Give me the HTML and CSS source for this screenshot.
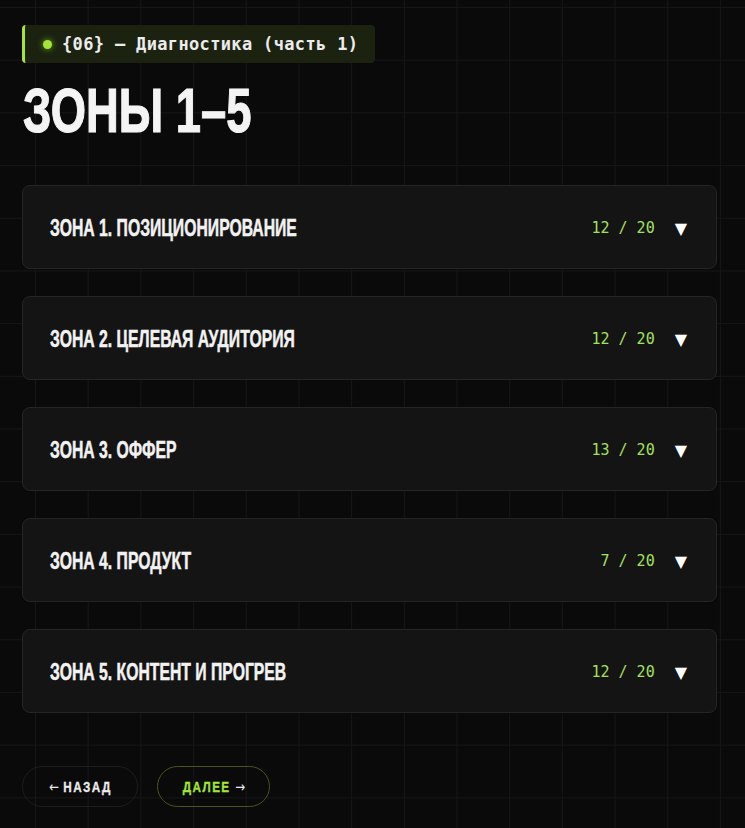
FILE: index.html
```html
<!DOCTYPE html>
<html lang="ru">
<head>
<meta charset="utf-8">
<title>Зоны 1–5</title>
<link rel="stylesheet" href="styles.css">
</head>
<body>
<main class="page">
  <div class="tag"><span class="dot"></span><span class="tag-text">{06} — Диагностика (часть 1)</span></div>
  <h1 class="title"><span class="narrow">ЗОНЫ 1–5</span></h1>
  <section class="zones">
    <div class="zone"><span class="zone-name narrow">ЗОНА 1. ПОЗИЦИОНИРОВАНИЕ</span><span class="zone-right"><span class="score">12 / 20</span><span class="caret">▼</span></span></div>
    <div class="zone"><span class="zone-name narrow">ЗОНА 2. ЦЕЛЕВАЯ АУДИТОРИЯ</span><span class="zone-right"><span class="score">12 / 20</span><span class="caret">▼</span></span></div>
    <div class="zone"><span class="zone-name narrow">ЗОНА 3. ОФФЕР</span><span class="zone-right"><span class="score">13 / 20</span><span class="caret">▼</span></span></div>
    <div class="zone"><span class="zone-name narrow">ЗОНА 4. ПРОДУКТ</span><span class="zone-right"><span class="score">7 / 20</span><span class="caret">▼</span></span></div>
    <div class="zone"><span class="zone-name narrow">ЗОНА 5. КОНТЕНТ И ПРОГРЕВ</span><span class="zone-right"><span class="score">12 / 20</span><span class="caret">▼</span></span></div>
  </section>
  <nav class="nav">
    <a class="btn btn-back"><span class="btn-label"><span class="arrow">←</span> НАЗАД</span></a>
    <a class="btn btn-next"><span class="btn-label">ДАЛЕЕ <span class="arrow">→</span></span></a>
  </nav>
</main>
</body>
</html>
```
FILE: styles.css
```css
html, body {
  margin: 0;
  padding: 0;
}

body {
  background-color: #0a0a0a;
  background-image:
    linear-gradient(to right, #161616 1px, transparent 1px),
    linear-gradient(to bottom, #161616 1px, transparent 1px);
  background-size: 52.7px 52.7px;
  background-position: 35px 7px;
  min-height: 828px;
  color: #f2f2f2;
}

.page {
  padding: 25px 28px 0 22px;
  display: flex;
  flex-direction: column;
  align-items: flex-start;
}

/* condensed display type: the bold sans squeezed horizontally */
.narrow {
  display: inline-block;
  transform-origin: left center;
  white-space: nowrap;
}

.tag {
  display: flex;
  align-items: center;
  gap: 10px;
  height: 38px;
  padding: 0 17px 0 18px;
  background: #1b2210;
  border-left: 3px solid #a3e635;
  border-radius: 4px;
  box-sizing: border-box;
}

.dot {
  width: 9px;
  height: 9px;
  border-radius: 50%;
  background: #a3e635;
  box-shadow: 0 0 6px rgba(163, 230, 53, 0.7);
}

.tag-text {
  font-family: "DejaVu Sans Mono", "Liberation Mono", monospace;
  font-weight: bold;
  font-size: 17px;
  letter-spacing: 0.35px;
  color: #ececec;
}

.title {
  margin: 11px 0 0 1px;
  font-family: "Liberation Sans", Arial, sans-serif;
  font-weight: bold;
  font-size: 63px;
  line-height: 72px;
  color: #f4f4f4;
  -webkit-text-stroke: 1.2px #f4f4f4;
}

.title .narrow {
  transform: scaleX(0.72);
}

.zones {
  margin-top: 39px;
  align-self: stretch;
  display: flex;
  flex-direction: column;
  gap: 27px;
}

.zone {
  height: 84px;
  box-sizing: border-box;
  display: flex;
  align-items: center;
  justify-content: space-between;
  padding: 0 29px 0 27px;
  background: #141414;
  border: 1px solid #252525;
  border-radius: 8px;
}

.zone-name {
  font-family: "Liberation Sans", Arial, sans-serif;
  font-weight: bold;
  font-size: 23px;
  color: #f2f2f2;
  -webkit-text-stroke: 0.5px #f2f2f2;
  transform: scaleX(0.685);
  margin-top: 3px;
}

.zone-right {
  display: flex;
  align-items: center;
  gap: 20px;
  margin-top: 2px;
}

.score {
  font-family: "DejaVu Sans Mono", "Liberation Mono", monospace;
  font-size: 15px;
  color: #a3e05e;
}

.caret {
  font-family: "DejaVu Sans", sans-serif;
  font-size: 16px;
  color: #ffffff;
}

.nav {
  margin-top: 53px;
  display: flex;
  gap: 19px;
}

.btn {
  height: 41px;
  box-sizing: border-box;
  display: flex;
  align-items: center;
  justify-content: center;
  border-radius: 21px;
  font-family: "Liberation Sans", Arial, sans-serif;
  font-weight: bold;
  font-size: 15px;
  letter-spacing: 1.8px;
  -webkit-text-stroke: 0.3px currentColor;
}

.btn-label {
  display: inline-block;
  white-space: nowrap;
  transform: scaleX(0.78);
}

.arrow {
  font-family: "DejaVu Sans", sans-serif;
  font-weight: normal;
  letter-spacing: 0;
  -webkit-text-stroke: 0;
}

.btn-back {
  width: 116px;
  border: 1px solid #1e1e1e;
  color: #ececec;
}

.btn-next {
  width: 113px;
  border: 1px solid #47561f;
  color: #a3e635;
}

.btn-next .arrow {
  color: #ececec;
}
```
